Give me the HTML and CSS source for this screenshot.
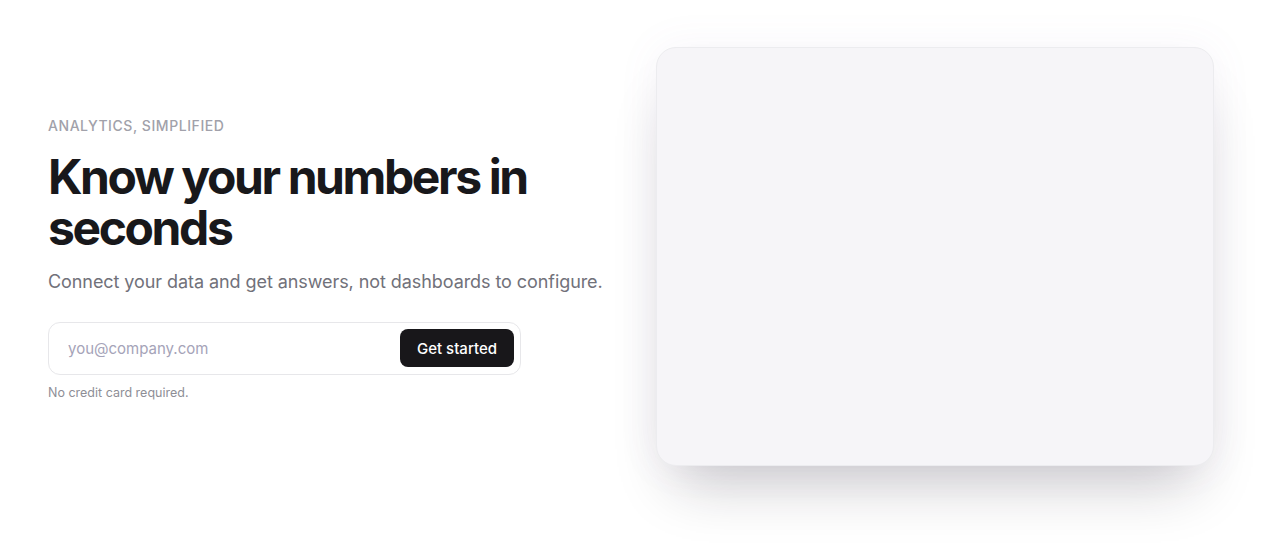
FILE: index.html
```html
<!DOCTYPE html>
<html lang="en">
<head>
<meta charset="utf-8">
<title>Analytics, simplified</title>
<link rel="stylesheet" href="styles.css">
</head>
<body>
<main class="hero">
  <section class="copy">
    <p class="eyebrow">Analytics, simplified</p>
    <h1 class="title">Know your numbers in seconds</h1>
    <p class="lead">Connect your data and get answers, not dashboards to configure.</p>
    <form class="signup">
      <input class="email" type="email" placeholder="you@company.com">
      <button class="cta" type="button">Get started</button>
    </form>
    <p class="note">No credit card required.</p>
  </section>
  <div class="visual">
    <div class="card"></div>
  </div>
</main>
</body>
</html>
```

FILE: styles.css
```css
* { box-sizing: border-box; }
html, body { margin: 0; padding: 0; background: #ffffff; }
body {
  font-family: Inter, "Noto Sans", "Liberation Sans", sans-serif;
  color: #18181b;
  height: 559px;
  overflow: hidden;
}
.hero {
  display: grid;
  grid-template-columns: 1fr 558px;
  gap: 40px;
  align-items: center;
  padding: 47px 66px 0 48px;
}
.copy { display: flex; flex-direction: column; padding-top: 4px; }
.eyebrow {
  margin: 0;
  font-size: 14px;
  font-weight: 500;
  letter-spacing: 0.04em;
  text-transform: uppercase;
  color: #a1a1aa;
  line-height: 17px;
}
.title {
  margin: 17px 0 0;
  font-size: 48px;
  font-weight: 700;
  letter-spacing: -0.05em;
  line-height: 51px;
  color: #18181b;
  max-width: 520px;
}
.lead {
  margin: 16px 0 0;
  font-size: 18px;
  line-height: 26px;
  letter-spacing: -0.004em;
  color: #71717a;
}
.signup {
  margin: 27px 0 0;
  width: 473px;
  height: 53px;
  display: flex;
  align-items: center;
  gap: 8px;
  padding: 0 6px 0 19px;
  border: 1px solid #e7e7ea;
  border-radius: 12px;
  background: #fff;
}
.email {
  flex: 1;
  border: 0;
  outline: none;
  font-family: inherit;
  font-size: 15px;
  color: #18181b;
  background: transparent;
  padding: 0;
}
.email::placeholder { color: #a5a3b8; }
.cta {
  height: 38px;
  padding: 0 17px;
  border: 0;
  border-radius: 8px;
  background: #18171a;
  color: #fff;
  font-family: inherit;
  font-size: 15px;
  font-weight: 500;
}
.note {
  margin: 10px 0 0;
  font-size: 12.5px;
  color: #8e8e96;
  line-height: 16px;
}
.visual { display: flex; }
.card {
  width: 558px;
  height: 419px;
  border-radius: 20px;
  background: #f6f5f8;
  border: 1px solid #ececef;
  box-shadow: 0 36px 56px -20px rgba(24, 20, 35, 0.24), 0 0 40px 4px rgba(130, 100, 170, 0.05);
}
```
